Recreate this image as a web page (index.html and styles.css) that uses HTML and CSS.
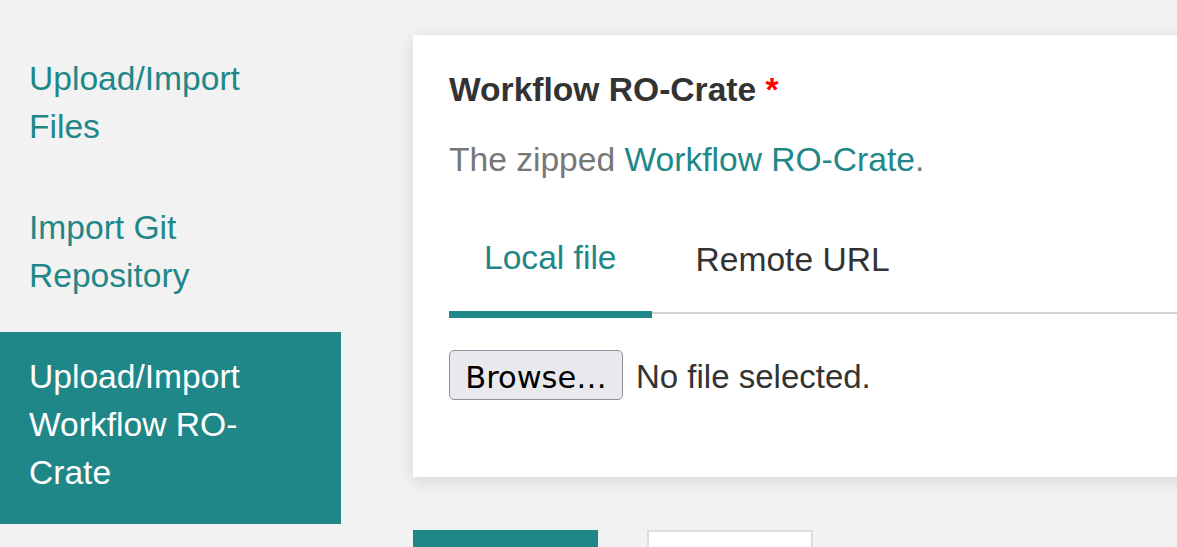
FILE: index.html
```html
<!DOCTYPE html>
<html lang="en">
<head>
<meta charset="utf-8">
<title>Create Workflow</title>
<link rel="stylesheet" href="styles.css">
</head>
<body>
<div class="page">
  <nav class="sidebar">
    <ul class="nav-pills">
      <li class="pill"><a href="#">Upload/Import Files</a></li>
      <li class="pill"><a href="#">Import Git Repository</a></li>
      <li class="pill active"><a href="#">Upload/Import Workflow RO-Crate</a></li>
    </ul>
  </nav>
  <main class="content">
    <div class="card">
      <h3 class="field-label">Workflow RO-Crate <span class="required">*</span></h3>
      <p class="help">The zipped <a href="#">Workflow RO-Crate</a>.</p>
      <ul class="tabs">
        <li class="tab active">Local file</li>
        <li class="tab">Remote URL</li>
      </ul>
      <div class="tab-pane">
        <span class="file-btn">Browse…</span>
        <span class="file-status">No file selected.</span>
      </div>
    </div>
    <div class="actions">
      <button class="btn btn-primary" type="button" aria-label="Register"></button>
      <button class="btn btn-default" type="button" aria-label="Cancel"></button>
    </div>
  </main>
</div>
</body>
</html>
```

FILE: styles.css
```css
html, body {
  margin: 0;
  padding: 0;
  overflow: hidden;
  height: 100%;
}

body {
  background: #f2f2f2;
  font-family: "Liberation Sans", Arial, sans-serif;
  font-size: 33.6px;
  line-height: 48px;
  color: #333333;
}

a {
  color: #1f8787;
  text-decoration: none;
}

.page {
  display: flex;
  align-items: flex-start;
}

.sidebar {
  flex: 0 0 341px;
  width: 341px;
  padding-top: 34px;
}

.nav-pills {
  list-style: none;
  margin: 0;
  padding: 0;
  display: flex;
  flex-direction: column;
  gap: 5px;
}

.pill a {
  display: block;
  padding: 21px 29px 27px 29px;
  color: #1f8787;
}

.pill.active a {
  background: #1f8787;
  color: #ffffff;
}

.content {
  flex: 0 0 820px;
  margin-left: 72px;
  padding-top: 35px;
}

.card {
  background: #ffffff;
  box-shadow: 0 4px 16px rgba(0, 0, 0, 0.12);
  padding: 31px 36px 76px 36px;
}

.field-label {
  margin: 0;
  font-size: 33.6px;
  line-height: 48px;
  font-weight: bold;
  color: #333333;
}

.required {
  color: #ff0000;
}

.help {
  margin: 22px 0 26px 0;
  color: #777777;
}

.tabs {
  list-style: none;
  margin: 0;
  padding: 0;
  display: flex;
  align-items: flex-start;
  border-bottom: 2px solid #d2d2d2;
}

.tab {
  padding: 26px 35px 0 35px;
  margin-left: 9px;
  color: #333333;
}

.tab.active {
  margin-left: 0;
  padding: 24px 35px 29px 35px;
  border-bottom: 7px solid #1f8787;
  margin-bottom: -6px;
  color: #1f8787;
}

.tab-pane {
  padding-top: 36px;
  display: flex;
  align-items: baseline;
}

.file-btn {
  box-sizing: border-box;
  width: 174px;
  padding: 9px 0 4px 0;
  border: 1px solid #8f8f9d;
  border-radius: 5px;
  background: #e9e9ed;
  color: #000000;
  text-align: center;
  font-family: "DejaVu Sans", sans-serif;
  font-size: 30.5px;
  line-height: normal;
}

.file-status {
  margin-left: 13px;
  font-size: 33px;
  color: #333333;
}

.actions {
  margin-top: 53px;
  display: flex;
  align-items: flex-start;
}

.btn {
  box-sizing: border-box;
  height: 96px;
  padding: 24px 0;
  border-radius: 0;
}

.btn-primary {
  width: 185px;
  background: #1f8787;
  border: none;
}

.btn-default {
  width: 166px;
  margin-left: 49px;
  background: #ffffff;
  border: 2px solid #dddddd;
}
```
